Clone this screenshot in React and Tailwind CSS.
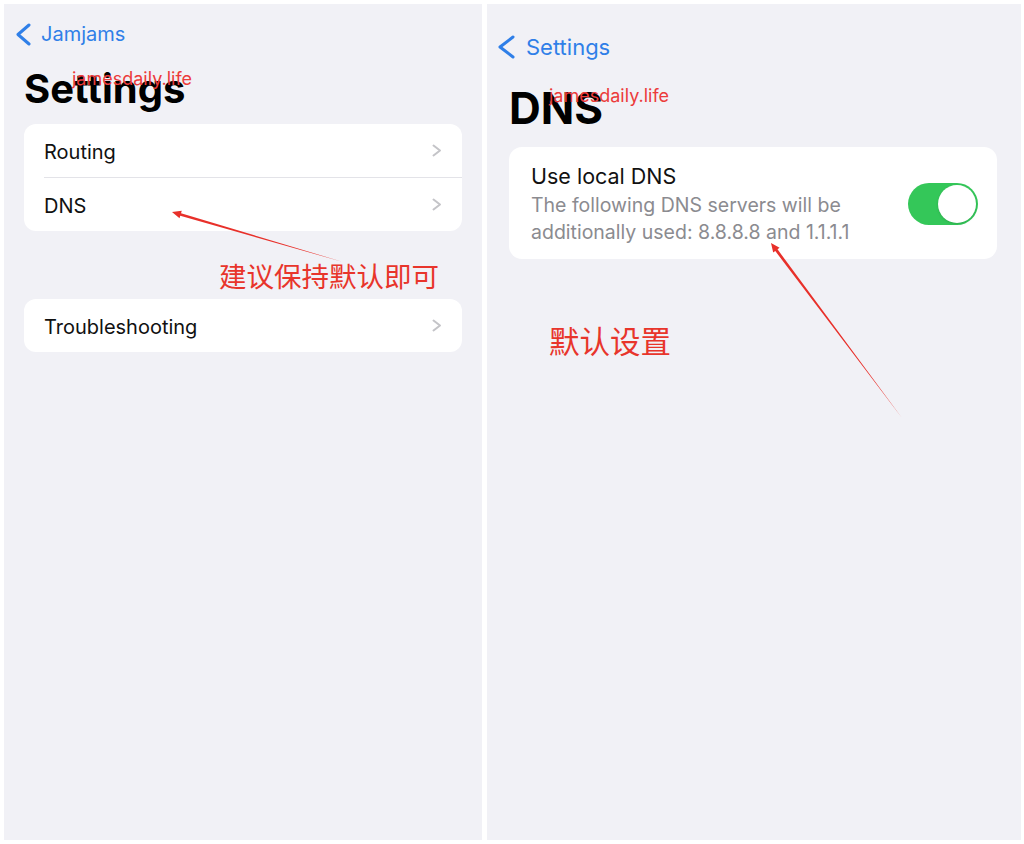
const font = { fontFamily: 'Inter, "Noto Sans CJK SC", sans-serif' }

function Arrow({ x1, y1, x2, y2, head = 9, width = 2.8 }) {
    // tapered line from tail (x1,y1) to head (x2,y2)
    const dx = x2 - x1
    const dy = y2 - y1
    const len = Math.hypot(dx, dy)
    const ux = dx / len
    const uy = dy / len
    const nx = -uy
    const ny = ux
    const bx = x2 - ux * head
    const by = y2 - uy * head
    const w = width / 2
    const hw = 4
    const pts = [
        [x1, y1],
        [bx + nx * w, by + ny * w],
        [bx + nx * hw, by + ny * hw],
        [x2, y2],
        [bx - nx * hw, by - ny * hw],
        [bx - nx * w, by - ny * w],
    ]
    return <polygon points={pts.map((p) => p.join(',')).join(' ')} fill="#e8302a" />
}

function BackChevron({ w, h }) {
    return (
        <svg width={w} height={h} viewBox={`0 0 ${w} ${h}`} fill="none">
            <polyline points={`${w - 2},2 2,${h / 2} ${w - 2},${h - 2}`} stroke="#2f7fe8" strokeWidth="3" strokeLinecap="round" strokeLinejoin="round" />
        </svg>
    )
}

function Disclosure() {
    return (
        <svg width="10" height="13" viewBox="0 0 10 13" fill="none">
            <polyline points="1.5,1.5 8,6.5 1.5,11.5" stroke="#c4c4c8" strokeWidth="2" strokeLinecap="round" strokeLinejoin="round" />
        </svg>
    )
}

function Row({ label, last, h = 'h-[53px]' }) {
    return (
        <div className={`flex items-center ${h} pl-5`}>
            <div className={`flex flex-1 items-center h-full pr-5 ${last ? '' : 'border-b border-[#e3e3e8]'}`}>
                <span className="flex-1 text-[20px] text-[#111] pt-[2px]">{label}</span>
                <Disclosure />
            </div>
        </div>
    )
}

export default function App() {
    return (
        <div className="relative w-[1024px] h-[844px] bg-white flex gap-[5px] pl-[4px] pt-[4px]" style={font}>
            {/* left screenshot */}
            <div className="w-[478px] h-[836px] bg-[#f1f1f6] px-5">
                <div className="flex items-center h-[40px] mt-[10px] -ml-[8px] text-[#2f7fe8]">
                    <BackChevron w={15} h={23} />
                    <span className="text-[20px] ml-[10px]">Jamjams</span>
                </div>
                <div className="relative h-[70px] flex items-center">
                    <h1 className="text-[40px] font-bold text-black">Settings</h1>
                    <span className="absolute left-[48px] top-[11px] text-[18px] text-[#ec3b3b]">jamesdaily.life</span>
                </div>
                <div className="bg-white rounded-[12px] overflow-hidden">
                    <Row label="Routing" h="h-[54px]" />
                    <Row label="DNS" last />
                </div>
                <p className="ml-[195px] mt-[29px] mb-[5px] text-[27.5px] leading-[34px] text-[#e8352b]">建议保持默认即可</p>
                <div className="bg-white rounded-[12px] overflow-hidden">
                    <Row label="Troubleshooting" last />
                </div>
            </div>

            {/* right screenshot */}
            <div className="w-[534px] h-[836px] bg-[#f1f1f6] pl-[22px] pr-[24px]">
                <div className="flex items-center h-[44px] mt-[21px] -ml-[11px] text-[#2f7fe8]">
                    <BackChevron w={17} h={24} />
                    <span className="text-[22px] ml-[11px]">Settings</span>
                </div>
                <div className="relative h-[78px] flex items-center">
                    <h1 className="text-[44px] font-bold text-black">DNS</h1>
                    <span className="absolute left-[40px] top-[13px] text-[18px] text-[#ec3b3b]">jamesdaily.life</span>
                </div>
                <div className="bg-white rounded-[13px] flex items-center pl-[22px] pr-[19px] pt-[14px] pb-[13px]">
                    <div className="flex-1">
                        <p className="text-[21.5px] leading-[31px] text-[#111]">Use local DNS</p>
                        <p className="text-[19.5px] leading-[27px] text-[#8b8b90] w-[345px]">
                            The following DNS servers will be additionally used: 8.8.8.8 and 1.1.1.1
                        </p>
                    </div>
                    <div className="w-[70px] h-[42px] rounded-full bg-[#34c759] flex items-center justify-end pr-[2px]">
                        <div className="w-[38px] h-[38px] rounded-full bg-white shadow" />
                    </div>
                </div>
                <p className="ml-[40px] mt-[64px] text-[30.5px] leading-[38px] text-[#e8352b]">默认设置</p>
            </div>

            {/* annotation arrows */}
            <svg className="absolute inset-0 pointer-events-none" width="1024" height="844">
                <Arrow x1={343} y1={262} x2={172} y2={212} />
                <Arrow x1={902} y1={418} x2={771} y2={243} />
            </svg>
        </div>
    )
}
